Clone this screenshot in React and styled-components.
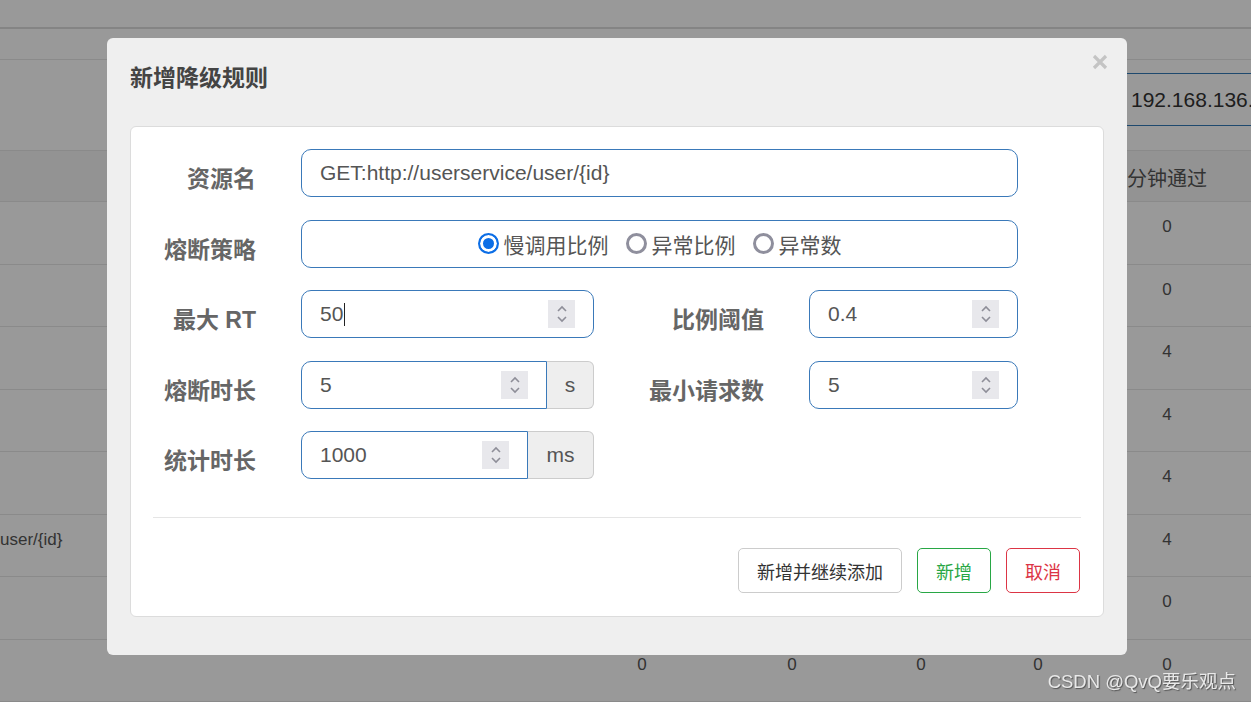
import styled, { createGlobalStyle } from "styled-components";

const GlobalStyle = createGlobalStyle`
  html, body {
    margin: 0;
    padding: 0;
  }
  body {
    font-family: "Liberation Sans", "Noto Sans CJK SC", sans-serif;
    background: #ffffff;
    overflow: hidden;
  }
  * {
    box-sizing: border-box;
  }
`;

const tableCols = "584px 116px 184px 74px 160px 98px 1fr";

const rows = [
  { res: "", vals: ["0", "0", "0", "0", "0"] },
  { res: "", vals: ["0", "0", "0", "0", "0"] },
  { res: "", vals: ["0", "0", "0", "0", "4"] },
  { res: "", vals: ["0", "0", "0", "0", "4"] },
  { res: "", vals: ["0", "0", "0", "0", "4"] },
  { res: "user/{id}", vals: ["0", "0", "0", "0", "4"] },
  { res: "", vals: ["0", "0", "0", "0", "0"] },
  { res: "", vals: ["0", "0", "0", "0", "0"] },
];

export default function App() {
  return (
    <>
      <GlobalStyle />
      <Page>
        <TopBar />
        <SubBar />
        <SearchPanel>
          <SearchInput>192.168.136.1</SearchInput>
        </SearchPanel>
        <TableHead>
          <span />
          <span />
          <span />
          <span />
          <span />
          <HeadCell>分钟通过</HeadCell>
          <span />
        </TableHead>
        {rows.map((row, i) => (
          <TableRow key={i}>
            <ResCell>{row.res}</ResCell>
            {row.vals.map((v, j) => (
              <NumCell key={j}>{v}</NumCell>
            ))}
            <span />
          </TableRow>
        ))}
      </Page>

      <Backdrop>
        <Modal>
          <ModalHeader>
            <Title>新增降级规则</Title>
            <CloseButton>
              <svg width="16" height="16" viewBox="0 0 16 16">
                <path d="M2 2 L14 14 M14 2 L2 14" stroke="#c4c4c4" strokeWidth="3.2" strokeLinecap="butt" />
              </svg>
            </CloseButton>
          </ModalHeader>

          <Card>
            <Form>
              <Label>资源名</Label>
              <Field $span>
                <FieldText>GET:http://userservice/user/{"{id}"}</FieldText>
              </Field>

              <Label>熔断策略</Label>
              <Field $span $center>
                <RadioGroup>
                  <RadioItem>
                    <RadioDot $checked />
                    慢调用比例
                  </RadioItem>
                  <RadioItem>
                    <RadioDot />
                    异常比例
                  </RadioItem>
                  <RadioItem>
                    <RadioDot />
                    异常数
                  </RadioItem>
                </RadioGroup>
              </Field>

              <Label>最大 RT</Label>
              <Field>
                <FieldText>
                  50<Caret />
                </FieldText>
                <Spinner />
              </Field>
              <span />
              <Label>比例阈值</Label>
              <Field>
                <FieldText>0.4</FieldText>
                <Spinner />
              </Field>

              <Label>熔断时长</Label>
              <Group>
                <Field $grouped>
                  <FieldText>5</FieldText>
                  <Spinner />
                </Field>
                <Addon $w={47}>s</Addon>
              </Group>
              <span />
              <Label>最小请求数</Label>
              <Field>
                <FieldText>5</FieldText>
                <Spinner />
              </Field>

              <Label>统计时长</Label>
              <Group>
                <Field $grouped>
                  <FieldText>1000</FieldText>
                  <Spinner />
                </Field>
                <Addon $w={66}>ms</Addon>
              </Group>
            </Form>

            <Divider />

            <Footer>
              <Button>新增并继续添加</Button>
              <Button $tone="#28a745">新增</Button>
              <Button $tone="#dc3545">取消</Button>
            </Footer>
          </Card>
        </Modal>
        <Watermark>CSDN @QvQ要乐观点</Watermark>
      </Backdrop>
    </>
  );
}

function Spinner() {
  return (
    <SpinBox>
      <svg width="12" height="20" viewBox="0 0 12 20">
        <path d="M2 7 L6 3 L10 7" fill="none" stroke="#8e8e98" strokeWidth="1.6" />
        <path d="M2 13 L6 17 L10 13" fill="none" stroke="#8e8e98" strokeWidth="1.6" />
      </svg>
    </SpinBox>
  );
}

/* ---------- background page ---------- */

const Page = styled.div`
  width: 1251px;
  height: 702px;
  overflow: hidden;
  color: #555;
`;

const TopBar = styled.div`
  height: 29px;
  border-bottom: 2px solid #dcdcdc;
`;

const SubBar = styled.div`
  height: 31px;
  border-bottom: 1px solid #e6e6e6;
`;

const SearchPanel = styled.div`
  height: 91px;
  padding-top: 13px;
  border-bottom: 1px solid #e6e6e6;
`;

const SearchInput = styled.div`
  margin-left: 1117px;
  height: 53px;
  padding-left: 14px;
  display: flex;
  align-items: center;
  border-top: 1px solid #337ab7;
  border-bottom: 1px solid #337ab7;
  font-size: 21px;
  color: #333;
  white-space: nowrap;
  overflow: hidden;
`;

const TableHead = styled.div`
  display: grid;
  grid-template-columns: ${tableCols};
  height: 51px;
  background: #f5f5f5;
  border-bottom: 1px solid #e6e6e6;
  align-items: center;
`;

const HeadCell = styled.span`
  font-size: 20px;
  color: #555;
  text-align: center;
  white-space: nowrap;
  padding-top: 2px;
`;

const TableRow = styled.div`
  display: grid;
  grid-template-columns: ${tableCols};
  height: 62.5px;
  border-bottom: 1px solid #e6e6e6;
  padding-top: 15px;
  font-size: 17px;
  color: #555;
`;

const ResCell = styled.span`
  white-space: nowrap;
`;

const NumCell = styled.span`
  text-align: center;
`;

/* ---------- modal ---------- */

const Backdrop = styled.div`
  position: fixed;
  inset: 0;
  background: rgba(0, 0, 0, 0.4);
`;

const Modal = styled.div`
  margin: 38px 0 0 107px;
  width: 1020px;
  height: 617px;
  background: #efefef;
  border-radius: 6px;
  padding: 0 23px 38px;
`;

const ModalHeader = styled.div`
  height: 88px;
  display: flex;
  justify-content: space-between;
  align-items: flex-start;
`;

const Title = styled.h4`
  margin: 28px 0 0;
  font-size: 23px;
  line-height: 24px;
  font-weight: 700;
  color: #444;
`;

const CloseButton = styled.span`
  display: block;
  margin: 16px -4px 0 0;
  width: 16px;
  height: 16px;
  svg {
    display: block;
  }
`;

const Card = styled.div`
  background: #ffffff;
  border: 1px solid #dcdcdc;
  border-radius: 6px;
  padding: 22px 22px 23px;
`;

const Form = styled.div`
  display: grid;
  grid-template-columns: 148px 293px 68px 147px 209px;
  grid-auto-rows: 48px;
  row-gap: 22.5px;
`;

const Label = styled.div`
  display: flex;
  align-items: center;
  justify-content: flex-end;
  padding: 8px 45px 0 0;
  font-size: 23px;
  font-weight: 700;
  color: #666;
  white-space: nowrap;
`;

const Field = styled.div`
  grid-column: ${(p) => (p.$span ? "2 / 6" : "auto")};
  display: flex;
  align-items: center;
  justify-content: ${(p) => (p.$center ? "center" : "flex-start")};
  height: 48px;
  padding: 0 18px 0 18px;
  border: 1px solid #3a79b9;
  border-radius: ${(p) => (p.$grouped ? "10px 0 0 10px" : "10px")};
  background: #ffffff;
  font-size: 21px;
  color: #555;
  flex: ${(p) => (p.$grouped ? 1 : "none")};
`;

const FieldText = styled.span`
  flex: 1;
  display: flex;
  align-items: center;
  white-space: nowrap;
`;

const Caret = styled.span`
  display: inline-block;
  width: 1px;
  height: 23px;
  background: #222;
  margin-left: 1px;
`;

const SpinBox = styled.span`
  width: 27px;
  height: 28px;
  background: #e8e8ec;
  display: flex;
  align-items: center;
  justify-content: center;
  svg {
    display: block;
  }
`;

const Group = styled.div`
  display: flex;
`;

const Addon = styled.div`
  width: ${(p) => p.$w}px;
  height: 48px;
  display: flex;
  align-items: center;
  justify-content: center;
  background: #eeeeee;
  border: 1px solid #cccccc;
  border-left: none;
  border-radius: 0 6px 6px 0;
  font-size: 21px;
  color: #555;
`;

const RadioGroup = styled.div`
  display: flex;
  align-items: center;
  gap: 17px;
`;

const RadioItem = styled.label`
  display: flex;
  align-items: center;
  gap: 5px;
  font-size: 21px;
  color: #555;
  white-space: nowrap;
`;

const RadioDot = styled.span`
  width: 21px;
  height: 21px;
  border-radius: 50%;
  border: ${(p) => (p.$checked ? "2.5px solid #0c6ee6" : "3px solid #8f8f9d")};
  background: ${(p) => (p.$checked ? "#0c6ee6" : "#ffffff")};
  box-shadow: ${(p) => (p.$checked ? "inset 0 0 0 3px #ffffff" : "none")};
`;

const Divider = styled.div`
  margin-top: 38px;
  height: 1px;
  background: #e5e5e5;
`;

const Footer = styled.div`
  margin-top: 30px;
  margin-right: 1px;
  display: flex;
  justify-content: flex-end;
  gap: 15px;
`;

const Button = styled.button`
  height: 45px;
  min-width: 74px;
  padding: 0 18px;
  background: #ffffff;
  border: 1px solid ${(p) => p.$tone || "#cccccc"};
  border-radius: 5px;
  color: ${(p) => p.$tone || "#333"};
  font-family: "Liberation Sans", "Noto Sans CJK SC", sans-serif;
  font-size: 18px;
  cursor: pointer;
`;

const Watermark = styled.div`
  position: absolute;
  right: 15px;
  bottom: 9px;
  font-size: 18.5px;
  color: #e9e9e9;
  text-shadow: 1px 1px 1px #555;
  white-space: nowrap;
`;
